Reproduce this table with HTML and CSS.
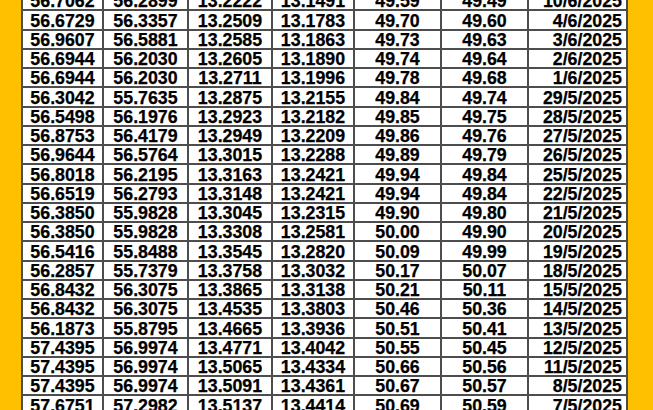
FILE: index.html
```html
<!DOCTYPE html>
<html>
<head>
<meta charset="utf-8">
<link rel="stylesheet" href="styles.css">
</head>
<body>
<div class="frame">
<table class="rates">
<colgroup>
<col class="w1"><col class="w2"><col class="w3"><col class="w4"><col class="w5"><col class="w6"><col class="w7">
</colgroup>
<tbody>
<tr><td>56.7062</td><td>56.2899</td><td>13.2222</td><td>13.1491</td><td>49.59</td><td>49.49</td><td class="date">10/6/2025</td></tr>
<tr><td>56.6729</td><td>56.3357</td><td>13.2509</td><td>13.1783</td><td>49.70</td><td>49.60</td><td class="date">4/6/2025</td></tr>
<tr><td>56.9607</td><td>56.5881</td><td>13.2585</td><td>13.1863</td><td>49.73</td><td>49.63</td><td class="date">3/6/2025</td></tr>
<tr><td>56.6944</td><td>56.2030</td><td>13.2605</td><td>13.1890</td><td>49.74</td><td>49.64</td><td class="date">2/6/2025</td></tr>
<tr><td>56.6944</td><td>56.2030</td><td>13.2711</td><td>13.1996</td><td>49.78</td><td>49.68</td><td class="date">1/6/2025</td></tr>
<tr><td>56.3042</td><td>55.7635</td><td>13.2875</td><td>13.2155</td><td>49.84</td><td>49.74</td><td class="date">29/5/2025</td></tr>
<tr><td>56.5498</td><td>56.1976</td><td>13.2923</td><td>13.2182</td><td>49.85</td><td>49.75</td><td class="date">28/5/2025</td></tr>
<tr><td>56.8753</td><td>56.4179</td><td>13.2949</td><td>13.2209</td><td>49.86</td><td>49.76</td><td class="date">27/5/2025</td></tr>
<tr><td>56.9644</td><td>56.5764</td><td>13.3015</td><td>13.2288</td><td>49.89</td><td>49.79</td><td class="date">26/5/2025</td></tr>
<tr><td>56.8018</td><td>56.2195</td><td>13.3163</td><td>13.2421</td><td>49.94</td><td>49.84</td><td class="date">25/5/2025</td></tr>
<tr><td>56.6519</td><td>56.2793</td><td>13.3148</td><td>13.2421</td><td>49.94</td><td>49.84</td><td class="date">22/5/2025</td></tr>
<tr><td>56.3850</td><td>55.9828</td><td>13.3045</td><td>13.2315</td><td>49.90</td><td>49.80</td><td class="date">21/5/2025</td></tr>
<tr><td>56.3850</td><td>55.9828</td><td>13.3308</td><td>13.2581</td><td>50.00</td><td>49.90</td><td class="date">20/5/2025</td></tr>
<tr><td>56.5416</td><td>55.8488</td><td>13.3545</td><td>13.2820</td><td>50.09</td><td>49.99</td><td class="date">19/5/2025</td></tr>
<tr><td>56.2857</td><td>55.7379</td><td>13.3758</td><td>13.3032</td><td>50.17</td><td>50.07</td><td class="date">18/5/2025</td></tr>
<tr><td>56.8432</td><td>56.3075</td><td>13.3865</td><td>13.3138</td><td>50.21</td><td>50.11</td><td class="date">15/5/2025</td></tr>
<tr><td>56.8432</td><td>56.3075</td><td>13.4535</td><td>13.3803</td><td>50.46</td><td>50.36</td><td class="date">14/5/2025</td></tr>
<tr><td>56.1873</td><td>55.8795</td><td>13.4665</td><td>13.3936</td><td>50.51</td><td>50.41</td><td class="date">13/5/2025</td></tr>
<tr><td>57.4395</td><td>56.9974</td><td>13.4771</td><td>13.4042</td><td>50.55</td><td>50.45</td><td class="date">12/5/2025</td></tr>
<tr><td>57.4395</td><td>56.9974</td><td>13.5065</td><td>13.4334</td><td>50.66</td><td>50.56</td><td class="date">11/5/2025</td></tr>
<tr><td>57.4395</td><td>56.9974</td><td>13.5091</td><td>13.4361</td><td>50.67</td><td>50.57</td><td class="date">8/5/2025</td></tr>
<tr><td>57.6751</td><td>57.2982</td><td>13.5137</td><td>13.4414</td><td>50.69</td><td>50.59</td><td class="date">7/5/2025</td></tr>
</tbody>
</table>
</div>
</body>
</html>
```

FILE: styles.css
```css
html, body {
  margin: 0;
  padding: 0;
  background: #ffc000;
  height: 100%;
  overflow: hidden;
}
.frame {
  padding-left: 21px;
  height: 410px;
  overflow: hidden;
}
.rates {
  margin-top: -10px;
  border-collapse: collapse;
  table-layout: fixed;
  width: 605px;
  background: #ffffff;
  font-family: "Liberation Sans", Arial, sans-serif;
  font-weight: bold;
  font-size: 17.8px;
  color: #000;
}
.w1 { width: 81px; }
.w2 { width: 85px; }
.w3 { width: 84px; }
.w4 { width: 82px; }
.w5 { width: 87px; }
.w6 { width: 87px; }
.w7 { width: 99px; }
.rates tr {
  height: 19.25px;
}
.rates td {
  border: 2px solid #4d4d4d;
  padding: 0;
  height: 17.25px;
  line-height: 16px;
  vertical-align: bottom;
  text-align: center;
  white-space: nowrap;
  -webkit-text-stroke: 0.25px #000;
}
.rates td.date {
  text-align: right;
  padding-right: 4px;
}
```
